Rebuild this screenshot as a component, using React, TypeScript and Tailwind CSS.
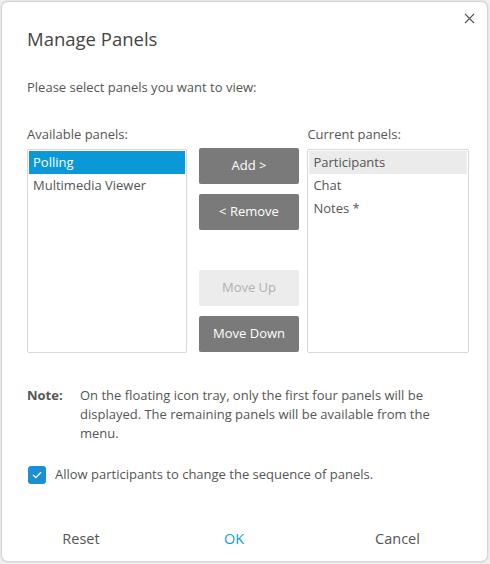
import React from "react";

export default function App() {
  const font = { fontFamily: '"Open Sans", "Noto Sans", sans-serif' };
  return (
    <div className="w-[490px] h-[564px] bg-[#f0f0f0] p-[1px]" style={font}>
      <div className="relative w-[487px] h-[561px] bg-white rounded-[7px] border border-[#d4d4d4] shadow-[0_0_2px_rgba(0,0,0,0.15)] flex flex-col">
        <button className="absolute right-[10px] top-[8px] w-[16px] h-[16px] flex items-center justify-center text-[#555]">
          <svg width="11" height="11" viewBox="0 0 11 11">
            <path d="M1 1 L10 10 M10 1 L1 10" stroke="#555" strokeWidth="1.1" />
          </svg>
        </button>
        <div className="pl-[25px] pr-[18px] pt-[23px]">
          <h1 className="text-[18.5px] leading-[28px] text-[#444]">Manage Panels</h1>
          <p className="mt-[25px] text-[13px] leading-[18px] text-[#555]">Please select panels you want to view:</p>
          <div className="mt-[29px] flex">
            <div className="flex flex-col w-[160px]">
              <div className="text-[13px] leading-[18px] text-[#555]">Available panels:</div>
              <div className="mt-[6px] h-[204px] border border-[#d8d8d8] rounded-[2px] p-[1px] text-[13px] text-[#555]">
                <div className="h-[23px] px-[4px] flex items-center bg-[#0b98d7] text-white">Polling</div>
                <div className="h-[23px] px-[4px] flex items-center">Multimedia Viewer</div>
              </div>
            </div>
            <div className="ml-[12px] mt-[23px] w-[101px] flex flex-col text-[13px]">
              <button className="h-[36px] rounded-[2px] bg-[#7a7a7a] text-white">Add &gt;</button>
              <button className="mt-[10px] h-[36px] rounded-[2px] bg-[#7a7a7a] text-white">&lt; Remove</button>
              <button className="mt-[40px] h-[36px] rounded-[2px] bg-[#ececec] text-[#b0b0b0]">Move Up</button>
              <button className="mt-[10px] h-[36px] rounded-[2px] bg-[#7a7a7a] text-white">Move Down</button>
            </div>
            <div className="ml-[8px] flex flex-col w-[162px]">
              <div className="text-[13px] leading-[18px] text-[#555]">Current panels:</div>
              <div className="mt-[6px] h-[204px] border border-[#d8d8d8] rounded-[2px] p-[1px] text-[13px] text-[#555]">
                <div className="h-[23px] px-[4px] flex items-center bg-[#ebebeb]">Participants</div>
                <div className="h-[23px] px-[4px] flex items-center">Chat</div>
                <div className="h-[23px] px-[4px] flex items-center">Notes *</div>
              </div>
            </div>
          </div>
          <div className="mt-[33px] flex text-[13px] leading-[19px] text-[#555]">
            <div className="w-[53px] font-bold text-[#555]">Note:</div>
            <div className="w-[360px]">On the floating icon tray, only the first four panels will be displayed. The remaining panels will be available from the menu.</div>
          </div>
          <div className="mt-[22px] flex items-center">
            <div className="w-[18px] h-[18px] rounded-[3px] bg-[#1a8fd4] flex items-center justify-center ml-[1px]">
              <svg width="10" height="8" viewBox="0 0 10 8">
                <path d="M1 4 L3.8 6.6 L9 1.2" stroke="white" strokeWidth="1.3" fill="none" />
              </svg>
            </div>
            <span className="ml-[9px] text-[13px] text-[#555]">Allow participants to change the sequence of panels.</span>
          </div>
        </div>
        <div className="mt-auto mb-[11px] flex text-[14.5px] px-[2px]">
          <button className="w-[154px] text-center text-[#555]">Reset</button>
          <button className="w-[152px] text-center text-[#1b9ad2]">OK</button>
          <button className="flex-1 text-center text-[#555]">Cancel</button>
        </div>
      </div>
    </div>
  );
}
